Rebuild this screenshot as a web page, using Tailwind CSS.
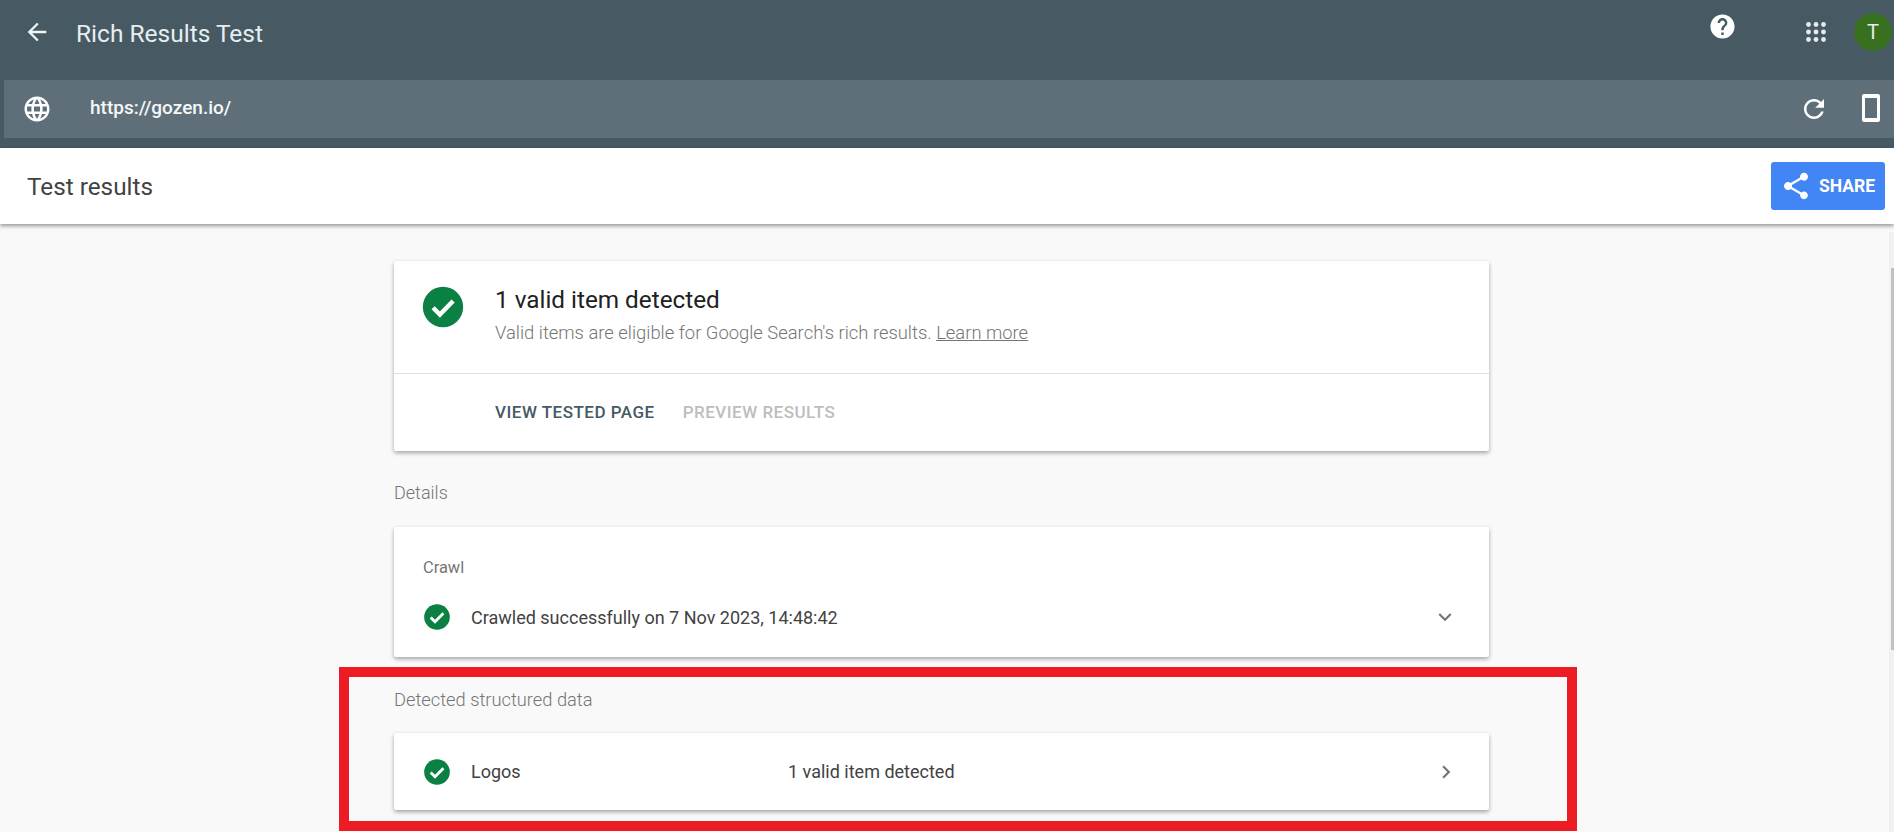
<!DOCTYPE html>
<html lang="en">
<head>
    <meta charset="UTF-8">
    <meta name="viewport" content="width=device-width, initial-scale=1.0">
    <title>Rich Results Test</title>
    <script src="https://cdn.jsdelivr.net/npm/@tailwindcss/browser@4"></script>
</head>
<body class="h-[832px] overflow-hidden bg-[#f9f9f9] font-['Roboto',sans-serif]">
    <!-- Top bar -->
    <header class="h-[148px] bg-[#475a64] text-white">
        <div class="flex h-[80px] items-start">
            <svg class="ml-[23px] mt-[18px] h-[28px] w-[28px]" viewBox="0 0 24 24" fill="#eef3f5"><path d="M20 11H7.83l5.59-5.59L12 4l-8 8 8 8 1.41-1.41L7.83 13H20v-2z"/></svg>
            <h1 class="ml-[25px] mt-[19px] text-[24.5px] leading-[30px] text-[#e6eef0]">Rich Results Test</h1>
            <svg class="ml-auto mt-[12px] h-[29px] w-[29px]" viewBox="0 0 24 24" fill="#fff"><path d="M12 2C6.48 2 2 6.48 2 12s4.48 10 10 10 10-4.48 10-10S17.52 2 12 2zm1 17h-2v-2h2v2zm2.07-7.75-.9.92C13.45 12.9 13 13.5 13 15h-2v-.5c0-1.1.45-2.1 1.17-2.83l1.24-1.26c.37-.36.59-.86.59-1.41 0-1.1-.9-2-2-2s-2 .9-2 2H8c0-2.21 1.79-4 4-4s4 1.79 4 4c0 .88-.36 1.68-.93 2.25z"/></svg>
            <svg class="ml-[69px] mt-[22px] h-[20px] w-[20px]" viewBox="0 0 20 20" fill="#e3ebee">
                <circle cx="2.5" cy="2.5" r="2.4"/><circle cx="10" cy="2.5" r="2.4"/><circle cx="17.5" cy="2.5" r="2.4"/>
                <circle cx="2.5" cy="10" r="2.4"/><circle cx="10" cy="10" r="2.4"/><circle cx="17.5" cy="10" r="2.4"/>
                <circle cx="2.5" cy="17.5" r="2.4"/><circle cx="10" cy="17.5" r="2.4"/><circle cx="17.5" cy="17.5" r="2.4"/>
            </svg>
            <div class="ml-[28px] mr-[2px] mt-[13px] flex h-[38px] w-[38px] items-center justify-center rounded-full bg-[#38701f] text-[20px] text-[#e6eef0]">T</div>
        </div>
        <div class="ml-[4px] flex h-[58px] items-center bg-[#5f6f7a]">
            <svg class="ml-[18px] h-[30px] w-[30px]" viewBox="0 0 24 24" fill="#fff"><path d="M11.99 2C6.47 2 2 6.48 2 12s4.47 10 9.99 10C17.52 22 22 17.52 22 12S17.52 2 11.99 2zm6.93 6h-2.95c-.32-1.25-.78-2.45-1.38-3.56 1.84.63 3.37 1.91 4.33 3.56zM12 4.04c.83 1.2 1.48 2.53 1.91 3.96h-3.82c.43-1.43 1.08-2.76 1.91-3.96zM4.26 14C4.1 13.36 4 12.69 4 12s.1-1.36.26-2h3.38c-.08.66-.14 1.32-.14 2s.06 1.34.14 2H4.26zm.82 2h2.95c.32 1.25.78 2.45 1.38 3.56-1.84-.63-3.37-1.9-4.33-3.56zm2.95-8H5.08c.96-1.66 2.49-2.93 4.33-3.56C8.81 5.55 8.35 6.75 8.03 8zM12 19.96c-.83-1.2-1.48-2.53-1.91-3.96h3.82c-.43 1.43-1.08 2.76-1.91 3.96zM14.34 14H9.66c-.09-.66-.16-1.32-.16-2s.07-1.35.16-2h4.68c.09.65.16 1.32.16 2s-.07 1.34-.16 2zm.25 5.56c.6-1.11 1.06-2.31 1.38-3.56h2.95c-.96 1.65-2.49 2.93-4.33 3.56zM16.36 14c.08-.66.14-1.32.14-2s-.06-1.34-.14-2h3.38c.16.64.26 1.31.26 2s-.1 1.36-.26 2h-3.38z"/></svg>
            <span class="mb-[2px] ml-[38px] text-[19px] font-medium text-[#f5f7f8]">https://gozen.io/</span>
            <svg class="ml-auto h-[30px] w-[30px]" viewBox="0 0 24 24" fill="#fff"><path d="M17.65 6.35C16.2 4.9 14.21 4 12 4c-4.42 0-7.99 3.58-7.99 8s3.57 8 7.99 8c3.73 0 6.84-2.55 7.73-6h-2.08c-.82 2.33-3.04 4-5.65 4-3.31 0-6-2.69-6-6s2.69-6 6-6c1.66 0 3.14.69 4.22 1.78L13 11h7V4l-2.35 2.35z"/></svg>
            <svg class="mb-[2px] ml-[33px] mr-[14px] h-[28px] w-[18px]" viewBox="0 0 18 28" fill="#fff"><path fill-rule="evenodd" d="M2 0h14a2 2 0 0 1 2 2v24a2 2 0 0 1-2 2H2a2 2 0 0 1-2-2V2a2 2 0 0 1 2-2zm1 4v20h12V4H3z"/></svg>
        </div>
    </header>

    <!-- Results bar -->
    <div class="relative flex h-[76px] items-center justify-between bg-white shadow-[0_2px_4px_rgba(0,0,0,0.4)]">
        <h2 class="ml-[27px] mt-[3px] text-[24.3px] text-[#424242]">Test results</h2>
        <button class="mr-[9px] flex h-[48px] w-[114px] items-center rounded-[3px] bg-[#4285f4] text-white">
            <svg class="ml-[9px] h-[32px] w-[32px]" viewBox="0 0 24 24" fill="#fff"><path d="M18 16.08c-.76 0-1.44.3-1.96.77L8.91 12.7c.05-.23.09-.46.09-.7s-.04-.47-.09-.7l7.05-4.11c.54.5 1.25.81 2.04.81 1.66 0 3-1.34 3-3s-1.34-3-3-3-3 1.34-3 3c0 .24.04.47.09.7L8.04 9.81C7.5 9.31 6.79 9 6 9c-1.66 0-3 1.34-3 3s1.34 3 3 3c.79 0 1.5-.31 2.04-.81l7.12 4.16c-.05.21-.08.43-.08.65 0 1.61 1.31 2.92 2.92 2.92s2.92-1.31 2.92-2.92-1.31-2.92-2.92-2.92z"/></svg>
            <span class="ml-[7px] text-[17.5px] font-bold">SHARE</span>
        </button>
    </div>

    <div class="flex h-[608px]">
        <main class="relative ml-[394px] mt-[37px] w-[1095px]">
            <!-- Summary card -->
            <section class="h-[190px] rounded-[2px] bg-white shadow-[0_2px_4px_rgba(0,0,0,0.35)]">
                <div class="flex h-[113px] border-b border-[#e0e0e0]">
                    <svg class="ml-[27px] mt-[24px] h-[44px] w-[44px]" viewBox="0 0 24 24"><circle cx="12" cy="12" r="11" fill="#0b8043"/><path d="M6.6 12.4l3.7 3.7 7.2-7.4" fill="none" stroke="#fff" stroke-width="2.4"/></svg>
                    <div class="ml-[30px]">
                        <p class="mt-[26px] text-[24.3px] leading-[26px] text-[#212121]">1 valid item detected</p>
                        <p class="mt-[10px] text-[18.4px] leading-[20px] font-light text-[#757575]">Valid items are eligible for Google Search's rich results. <a class="underline">Learn more</a></p>
                    </div>
                </div>
                <div class="flex h-[77px] items-center pl-[101px] text-[17px] font-medium tracking-[0.5px]">
                    <span class="text-[#455a64]">VIEW TESTED PAGE</span>
                    <span class="ml-[28px] text-[#bdbdbd]">PREVIEW RESULTS</span>
                </div>
            </section>

            <p class="mt-[32px] text-[18px] leading-[20px] font-light text-[#757575]">Details</p>

            <!-- Crawl card -->
            <section class="mt-[24px] h-[130px] rounded-[2px] bg-white pl-[29px] shadow-[0_2px_4px_rgba(0,0,0,0.35)]">
                <p class="pt-[32px] text-[16.4px] leading-[18px] text-[#757575]">Crawl</p>
                <div class="mt-[25px] flex h-[30px] items-center">
                    <svg class="h-[28px] w-[28px]" viewBox="0 0 24 24"><circle cx="12" cy="12" r="11" fill="#0b8043"/><path d="M6.6 12.4l3.7 3.7 7.2-7.4" fill="none" stroke="#fff" stroke-width="2.4"/></svg>
                    <span class="ml-[20px] text-[18px] text-[#424242]">Crawled successfully on 7 Nov 2023, 14:48:42</span>
                    <svg class="ml-auto mr-[31px] h-[26px] w-[26px]" viewBox="0 0 24 24" fill="#757575"><path d="M7.41 8.59 12 13.17l4.59-4.58L18 10l-6 6-6-6z"/></svg>
                </div>
            </section>

            <p class="mt-[33px] text-[18.3px] leading-[20px] font-light text-[#757575]">Detected structured data</p>

            <!-- Detected items -->
            <section class="mt-[23px] flex h-[77px] items-center rounded-[2px] bg-white pl-[29px] shadow-[0_2px_4px_rgba(0,0,0,0.35)]">
                <svg class="h-[28px] w-[28px]" viewBox="0 0 24 24"><circle cx="12" cy="12" r="11" fill="#0b8043"/><path d="M6.6 12.4l3.7 3.7 7.2-7.4" fill="none" stroke="#fff" stroke-width="2.4"/></svg>
                <span class="ml-[20px] w-[317px] text-[18px] text-[#424242]">Logos</span>
                <span class="text-[18px] text-[#424242]">1 valid item detected</span>
                <svg class="ml-auto mr-[30px] h-[26px] w-[26px]" viewBox="0 0 24 24" fill="#757575"><path d="M8.59 16.59 13.17 12 8.59 7.41 10 6l6 6-6 6z"/></svg>
            </section>

            <!-- Red annotation box -->
            <div class="absolute left-[-55px] top-[406px] h-[164px] w-[1238px] border-[10px] border-[#ed1c24]"></div>
        </main>
        <div class="ml-auto mt-[8px] w-[5px] bg-[#f1f1f1]">
            <div class="ml-[2px] mt-[36px] h-[382px] bg-[#c1c1c1]"></div>
        </div>
    </div>
</body>
</html>
